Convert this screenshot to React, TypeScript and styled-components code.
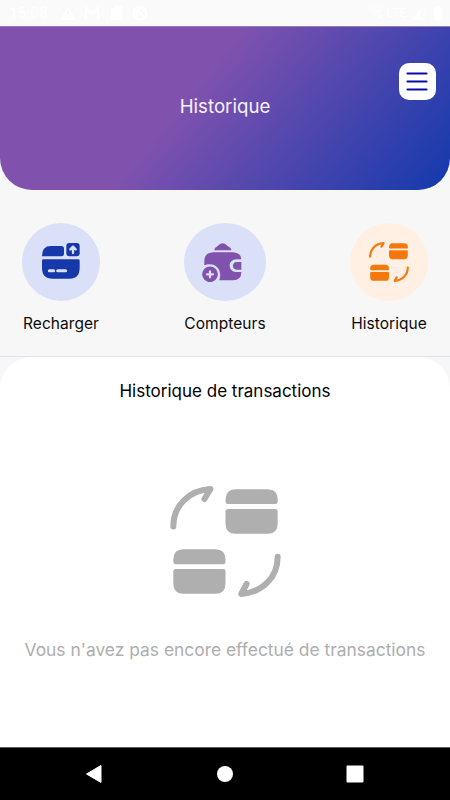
import React from "react";
import styled, { createGlobalStyle } from "styled-components";

const GlobalStyle = createGlobalStyle`
  *, *::before, *::after { box-sizing: border-box; }
  body { margin: 0; background: #f7f7f7; font-family: Inter, sans-serif; }
  svg { display: block; flex: none; }
`;

const Screen = styled.div`
  width: 450px;
  height: 800px;
  display: flex;
  flex-direction: column;
  overflow: hidden;
  background: #f7f7f7;
`;

const StatusBar = styled.div`
  flex: none;
  height: 26px;
  padding: 0 8px 0 9px;
  display: flex;
  align-items: center;
  justify-content: space-between;
  background: #fafafa;
  color: #fff;
  font: 400 15.5px/26px Roboto, sans-serif;
`;

const StatusGroup = styled.div<{ $gap: number }>`
  display: flex;
  align-items: center;
  gap: ${(p) => p.$gap}px;
`;

const Network = styled.span`
  font-size: 13px;
`;

const Header = styled.header`
  flex: none;
  height: 164px;
  display: grid;
  grid-template-columns: 1fr auto 1fr;
  align-items: start;
  padding: 37px 14px 0;
  border-radius: 0 0 32px 32px;
  border-top: 1px solid #9a78bd;
  background: linear-gradient(129deg, #8052ae 41.5%, #1239ad 100%) border-box;
`;

const HeaderTitle = styled.h1`
  grid-column: 2;
  margin: 31px 0 0;
  color: #f6f2fb;
  font-size: 18.7px;
  font-weight: 400;
  line-height: 24px;
`;

const MenuButton = styled.button`
  grid-column: 3;
  justify-self: end;
  margin-top: -1px;
  width: 37px;
  height: 37px;
  padding: 0;
  display: flex;
  align-items: center;
  justify-content: center;
  border: 0;
  border-radius: 10px;
  background: #fff;
`;

const Actions = styled.nav`
  flex: none;
  height: 167px;
  display: flex;
  justify-content: space-between;
  padding: 33px 22px 0;
  border-bottom: 1px solid #dbe1f7;
`;

const Action = styled.div`
  display: flex;
  flex-direction: column;
  align-items: center;
`;

const Bubble = styled.div<{ $tint: string; $width?: number }>`
  width: ${(p) => p.$width ?? 78}px;
  height: 78px;
  display: flex;
  align-items: center;
  justify-content: center;
  border-radius: 50%;
  background: ${(p) => p.$tint};
`;

const ActionLabel = styled.span`
  margin-top: 13px;
  width: 78px;
  display: flex;
  justify-content: center;
  white-space: nowrap;
  color: #0a0a0a;
  font-size: 15.5px;
  line-height: 20px;
  letter-spacing: 0.05px;
`;

const Panel = styled.main`
  flex: 1;
  display: flex;
  flex-direction: column;
  align-items: center;
  border-radius: 32px 32px 0 0;
  background: #fff;
`;

const PanelTitle = styled.h2`
  margin: 23px 0 84px;
  color: #000;
  font-size: 17px;
  font-weight: 400;
  line-height: 22px;
`;

const EmptyText = styled.p`
  margin: 42px 0 0;
  white-space: nowrap;
  color: #aeaeae;
  font-size: 17.4px;
  font-weight: 400;
  line-height: 22px;
`;

const NavBar = styled.footer`
  flex: none;
  height: 53px;
  display: flex;
  align-items: center;
  justify-content: space-between;
  padding: 0 86px 0 85px;
  border-top: 1px solid #5c5f5f;
  background: #000;
`;

const TransferIcon = ({ size, color }: { size: number; color: string }) => (
  <svg width={size} height={size} viewBox="60 48 330 332" fill={color}>
    <path d="M69 169C69 106 116 61 180 57L162 87" fill="none" stroke={color} strokeWidth="18" strokeLinecap="round" strokeLinejoin="round" />
    <path d="M381 260C381 322 334 366 272 371L288 341" fill="none" stroke={color} strokeWidth="18" strokeLinecap="round" strokeLinejoin="round" />
    <path d="M225 94Q225 58 255 58H351Q381 58 381 88V95Q381 102 374 102H232Q225 102 225 95Z" />
    <path d="M232 117H374Q381 117 381 124V161Q381 191 351 191H255Q225 191 225 161V124Q225 117 232 117Z" />
    <path d="M69 268Q69 237 99 237H195Q225 237 225 268V275Q225 282 218 282H76Q69 282 69 275Z" />
    <path d="M76 296H218Q225 296 225 303V340Q225 370 195 370H99Q69 370 69 340V303Q69 296 76 296Z" />
  </svg>
);

const RechargeIcon = () => (
  <svg width="38" height="38" viewBox="126 98 114 114" fill="#1539ab">
    <path d="M126 136Q126 107 153 107H184Q192 107 192 115V130Q192 138 184 138H128Q126 138 126 136Z" />
    <rect x="199" y="98" width="40" height="40" rx="9" />
    <path d="M219 128V112M211 117L219 109L227 117" fill="none" stroke="#dbe0f7" strokeWidth="7" strokeLinecap="round" strokeLinejoin="round" />
    <path d="M130 147H235Q239 147 239 151V172Q239 205 208 205H158Q126 205 126 172V151Q126 147 130 147Z" />
    <path d="M148 181.500H161M173 181.500H197" stroke="#dbe0f7" strokeWidth="9" strokeLinecap="round" />
  </svg>
);

const WalletIcon = () => (
  <svg width="46" height="40" viewBox="156 98 138 120" fill="#8052ae">
    <path d="M193 123C193 115 199 113 204 109C212 99 224 99 232 109C237 113 244 115 244 123Z" />
    <path d="M189 129H249Q274 131 274 150H260C232 150 232 188 260 188H274Q274 213 249 213H208C217 188 203 163 176 165C171 165 167 167 163 168V155Q163 131 189 129Z" />
    <path d="M260 158H274V181H260C245 181 245 158 260 158Z" />
    <circle cx="180" cy="195" r="23.500" />
    <path d="M180 186V204M171 195H189" stroke="#dbe0f7" strokeWidth="6.500" strokeLinecap="round" />
  </svg>
);

const StatusIcons = () => (
  <svg width="90" height="16" viewBox="0 0 90 16" fill="#fff">
    <path d="M8 1.500L16 15H0Z" />
    <path d="M8 6V10M8 12V13.500" stroke="#fafafa" strokeWidth="1.500" />
    <path d="M26 14V3.500L32 8.500L38 3.500V14" fill="none" stroke="#fff" strokeWidth="2.500" />
    <path d="M55 1H62V15H51V5Z" />
    <circle cx="80" cy="8" r="6.500" fill="none" stroke="#fff" strokeWidth="2" />
    <path d="M76 4L84 12M78 11A4 4 0 1 1 84 7" fill="none" stroke="#fff" strokeWidth="2" />
  </svg>
);

export default function App() {
  return (
    <>
      <GlobalStyle />
      <Screen>
        <StatusBar>
          <StatusGroup $gap={12}>
            <span>15:08</span>
            <StatusIcons />
          </StatusGroup>
          <StatusGroup $gap={4}>
            <svg width="16" height="14" viewBox="0 0 16 14">
              <path d="M0 3Q8 -3 16 3L12 8H9V12Z" fill="#fcfcfc" />
              <path d="M11 9L15 13M15 9L11 13" stroke="#fff" strokeWidth="1.500" />
            </svg>
            <Network>LTE</Network>
            <svg width="14" height="14" viewBox="0 0 14 14">
              <path d="M1 13L13 1V13ZM9 5V13" fill="none" stroke="#fff" />
              <path d="M1 13L9 5V13Z" fill="#fff" />
            </svg>
            <svg width="13" height="16" viewBox="0 0 13 16" fill="#fff">
              <path d="M5 3H7V1H11V3H13V15H5Z" />
            </svg>
          </StatusGroup>
        </StatusBar>
        <Header>
          <HeaderTitle>Historique</HeaderTitle>
          <MenuButton aria-label="Menu">
            <svg width="23" height="20" viewBox="0 0 23 20">
              <path d="M1.500 1.500H20.500M1.500 9.500H20.500M1.500 17.500H20.500" stroke="#070da5" strokeWidth="2.200" strokeLinecap="round" />
            </svg>
          </MenuButton>
        </Header>
        <Actions>
          <Action>
            <Bubble $tint="#dae0f7"><RechargeIcon /></Bubble>
            <ActionLabel>Recharger</ActionLabel>
          </Action>
          <Action>
            <Bubble $tint="#dae0f7" $width={82}><WalletIcon /></Bubble>
            <ActionLabel>Compteurs</ActionLabel>
          </Action>
          <Action>
            <Bubble $tint="#fff0e3"><TransferIcon size={40} color="#f4780b" /></Bubble>
            <ActionLabel>Historique</ActionLabel>
          </Action>
        </Actions>
        <Panel>
          <PanelTitle>Historique de transactions</PanelTitle>
          <TransferIcon size={111} color="#afafaf" />
          <EmptyText>Vous n'avez pas encore effectué de transactions</EmptyText>
        </Panel>
        <NavBar>
          <svg width="18" height="20" viewBox="0 0 18 20"><path d="M1.500 10L16 1.500V18.500Z" fill="#fff" stroke="#fff" strokeLinejoin="round" /></svg>
          <svg width="18" height="18" viewBox="0 0 18 18"><circle cx="9" cy="9" r="8" fill="#fff" /></svg>
          <svg width="18" height="18" viewBox="0 0 18 18"><rect x="0.500" y="0.500" width="17" height="17" rx="1" fill="#fff" /></svg>
        </NavBar>
      </Screen>
    </>
  );
}
